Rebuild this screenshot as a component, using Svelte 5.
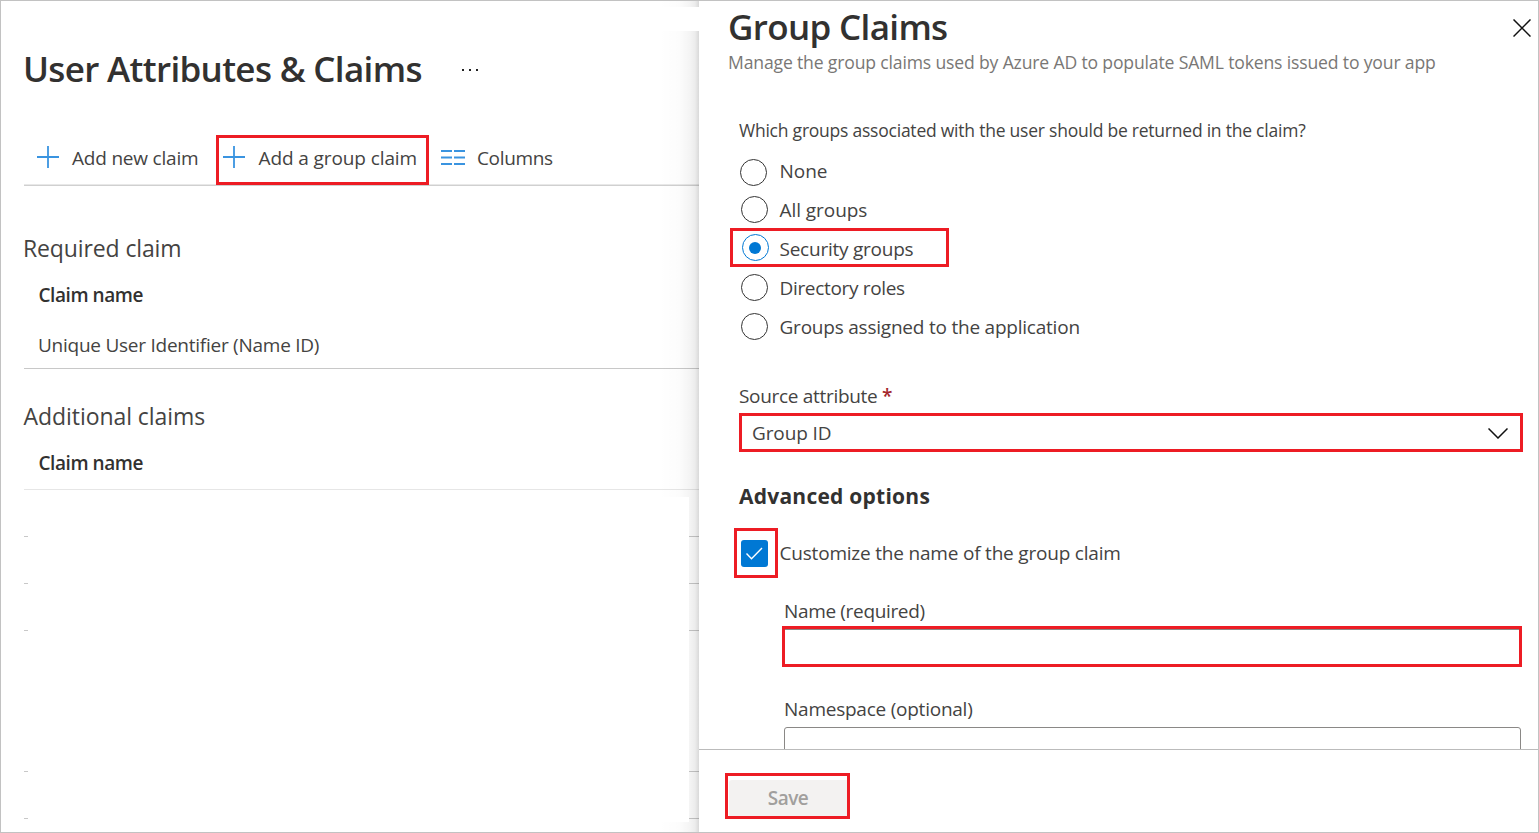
<script>
  const options = [
    { label: 'None', ls: -0.05, top: 1, left: 0 },
    { label: 'All groups', ls: -0.06, top: -1, left: 1 },
    { label: 'Security groups', ls: -0.24, top: -2, left: 2 },
    { label: 'Directory roles', ls: -0.33, top: -1, left: 1 },
    { label: 'Groups assigned to the application', ls: -0.22, top: -1, left: 1 }
  ];
  let selected = $state('Security groups');
  let customize = $state(true);
  const rows = [47, 47, 47, 141, 47];
</script>

{#snippet plus()}
  <svg class="plus" width="22" height="22" viewBox="0 0 22 22"><path d="M11 0v22M0 11h22" /></svg>
{/snippet}

<div class="page">
  <main class="left">
    <header class="title-row">
      <h1>User Attributes &amp; Claims</h1>
      <span class="dots"><i></i><i></i><i></i></span>
    </header>

    <nav class="toolbar">
      <button class="tool new">{@render plus()}<span>Add new claim</span></button>
      <button class="tool group">{@render plus()}<span>Add a group claim</span></button>
      <button class="tool cols">
        <svg width="24" height="15" viewBox="0 0 24 15"><path d="M0 1h11M13 1H24M0 7.5h11M13 7.5H24M0 14h11M13 14H24" /></svg>
        <span>Columns</span>
      </button>
    </nav>

    <section class="required">
      <h2>Required claim</h2>
      <div class="th">Claim name</div>
      <div class="td">Unique User Identifier (Name ID)</div>
    </section>
    <section class="additional">
      <h2>Additional claims</h2>
      <div class="th last">Claim name</div>
      {#each rows as h}
        <div class="blank" style="height:{h}px"><i></i><i></i></div>
      {/each}
    </section>
    <div class="shade"><i></i><i></i><i></i><i></i><i></i></div>
  </main>

  <aside class="panel">
    <div class="body">
      <header class="panel-head">
        <h1>Group Claims</h1>
        <button class="close" aria-label="Close">
          <svg width="18" height="18" viewBox="0 0 18 18"><path d="M.5.5l17 17M17.5.5l-17 17" /></svg>
        </button>
      </header>
      <p class="sub">Manage the group claims used by Azure AD to populate SAML tokens issued to your app</p>
      <p class="question">Which groups associated with the user should be returned in the claim?</p>
      <div class="options">
        {#each options as o}
          <button class="option" onclick={() => (selected = o.label)}>
            <span class="ring" class:on={selected === o.label} style="top:{o.top}px;left:{o.left}px"></span>
            <span class="label" style="letter-spacing:{o.ls}px">{o.label}</span>
            {#if o.label === 'Security groups'}<span class="frame"></span>{/if}
          </button>
        {/each}
      </div>

      <div class="source">Source attribute <b>*</b></div>
      <button class="select">
        <span>Group ID</span>
        <svg width="20" height="11" viewBox="0 0 20 11"><path d="M.5.5L10 10 19.5.5" /></svg>
      </button>

      <h3>Advanced options</h3>
      <div class="check-row">
        <button class="check-frame" aria-label="Customize" onclick={() => (customize = !customize)}>
          <span class="check">
            {#if customize}<svg width="27" height="27" viewBox="0 0 27 27"><path d="M5.5 13.6l5 5.2L21 8" /></svg>{/if}
          </span>
        </button>
        <span>Customize the name of the group claim</span>
      </div>

      <div class="field name">Name (required)</div>
      <div class="input-marked"></div>
      <div class="field space">Namespace (optional)</div>
      <div class="input"></div>
    </div>
    <footer><div class="save-frame"><button class="save" disabled>Save</button></div></footer>
  </aside>
</div>

<style>
  :global(body) { background: #fff; }
  * { box-sizing: border-box; }
  .page {
    position: relative; display: grid; grid-template-columns: 699px 1fr;
    width: 1539px; height: 833px; overflow: hidden; background: #fff;
    font: 400 19px "Open Sans", "Noto Sans", sans-serif; color: #444342;
    white-space: nowrap;
  }
  .page::after {
    content: ""; position: absolute; inset: 0; border: 1px solid #c2c2c2; pointer-events: none;
  }
  h1, h2, h3, p { margin: 0; }
  button {
    font: inherit; color: inherit; background: none; border: 0; padding: 0; margin: 0;
    text-align: left; white-space: nowrap; letter-spacing: inherit;
  }
  svg { display: block; flex: none; fill: none; }
  h1 { font-size: 35px; font-weight: 600; color: #323130; letter-spacing: -.66px; }

  .left { position: relative; height: 833px; padding: 44px 0 0 24px; overflow: hidden; }
  .title-row { display: flex; align-items: center; height: 48px; }
  .title-row h1 { width: 437px; line-height: 48px; margin-left: -1px; padding-top: 1px; }
  .dots { display: flex; gap: 5px; padding-top: 4px; margin-left: 2px; }
  .dots i { width: 2px; height: 2px; background: #222; }

  .toolbar {
    display: flex; height: 56px; margin-top: 38px;
    border-bottom: 1px solid #d0d0d0; box-shadow: inset 0 -1px #e8e8e8;
  }
  .tool { display: flex; align-items: center; height: 55px; }
  .tool svg { position: relative; top: -.5px; stroke: #3a94e0; stroke-width: 1.8; }
  .tool span { padding-top: 1px; }
  .new { width: 192px; padding-left: 13px; letter-spacing: -.2px; }
  .new svg { margin-right: 13px; }
  .group {
    position: relative; width: 213px; height: 50px; margin-top: 5px; border: 3px solid #ed1c24;
    padding-left: 4px; padding-bottom: 5px; letter-spacing: -.1px;
  }
  .group svg { margin-right: 13.5px; }
  .cols { padding-left: 12px; letter-spacing: -.35px; }
  .cols svg { stroke-width: 2; margin-right: 12px; }

  h2 { font-size: 23px; font-weight: 400; line-height: 40px; height: 40px; letter-spacing: -.06px; }
  .required h2 { margin-left: -1px; padding-top: 0; letter-spacing: -.12px; }
  .additional h2 { margin-left: -.5px; }
  .required { margin-top: 42px; }
  .additional { margin-top: 27px; }
  .th { height: 40px; line-height: 40px; margin-top: 7px; padding-left: 14.5px; font-weight: 600; color: #323130; letter-spacing: -.44px; }
  .td { height: 54px; padding: 7px 0 0 14px; line-height: 47px; border-bottom: 1px solid #c8c8c8; letter-spacing: -.25px; }
  .th.last { height: 47px; border-bottom: 1px solid #e6e6e6; }
  .blank { display: flex; justify-content: space-between; align-items: flex-end; }
  .blank i { width: 4px; height: 1px; background: #c8c8c8; }
  .blank i + i { width: 10px; }

  .shade {
    position: absolute; top: 1px; right: 0; bottom: 0; width: 40px;
    display: flex; flex-direction: column; align-items: flex-end; pointer-events: none;
  }
  .shade i {
    width: 40px; height: 6px; background: linear-gradient(to right, transparent, rgba(0,0,0,.012) 50%, rgba(0,0,0,.04) 75%, rgba(0,0,0,.075) 90%, rgba(0,0,0,.15)) right / 40px 100% no-repeat;
  }
  .shade i:nth-child(2) { height: 24px; background: none; }
  .shade i:nth-child(3) { height: 466px; }
  .shade i:nth-child(4) { width: 10px; height: 325px; }
  .shade i:nth-child(5) { height: 11px; }

  .panel { display: flex; flex-direction: column; height: 833px; background: #fff; }
  .body { height: 749px; overflow: hidden; padding: 2px 16px 0 40px; }
  .panel-head { display: flex; justify-content: space-between; height: 48px; margin-left: -11px; }
  .panel-head h1 { line-height: 50px; }
  .close { height: 18px; margin: 17px -8px 0 0; }
  .close svg { stroke: #111; stroke-width: 1.5; }
  .sub { height: 24px; line-height: 24px; margin-left: -11px; font-size: 17.6px; letter-spacing: -.167px; color: #797775; }
  .question { height: 26px; line-height: 26px; margin-top: 43px; font-size: 17.5px; letter-spacing: -.228px; }
  .options { margin-top: 9px; }
  .option { position: relative; display: flex; align-items: center; width: 219px; height: 39px; padding-left: 40px; }
  .label { line-height: 39px; }
  .ring {
    position: relative; flex: none; width: 27px; height: 27px; margin: 0 12.5px 0 -39px;
    border: 1.5px solid #333; border-radius: 50%; display: grid; place-items: center;
  }
  .ring.on { border-color: #0078d4; }
  .ring.on::after { content: ""; width: 12px; height: 12px; margin-left: -1px; border-radius: 50%; background: #0078d4; }
  .frame { position: absolute; left: -9px; top: -2px; width: 219px; height: 39px; border: 3px solid #ed1c24; }

  .source { height: 26px; line-height: 26px; margin-top: 36px; letter-spacing: -.31px; }
  .source b { color: #a4262c; font-weight: 600; }
  .select {
    display: flex; align-items: center; justify-content: space-between; width: 784px; height: 39px;
    margin-top: 4px; padding: 0 12px 0 10px; border: 3px solid #ed1c24; letter-spacing: -.12px;
  }
  .select svg { position: relative; top: .5px; stroke: #111; stroke-width: 1.5; }
  h3 { height: 30px; line-height: 30px; margin-top: 29px; font-size: 21px; font-weight: 700; color: #323130; letter-spacing: .24px; }
  .check-row { display: flex; align-items: center; height: 50px; margin-top: 17px; margin-left: -5px; letter-spacing: -.2px; }
  .check-frame { width: 44px; height: 50px; border: 3px solid #ed1c24; padding: 5px 0 0 4px; margin-right: 1.5px; }
  .check { display: block; width: 27px; height: 27px; margin-top: -4px; border-radius: 3px; background: #0078d4; }
  .check svg { stroke: #fff; stroke-width: 1.4; }
  .field { height: 26px; line-height: 26px; margin-left: 45px; }
  .name { margin-top: 20px; letter-spacing: -.34px; }
  .space { margin-top: 29px; letter-spacing: -.24px; }
  .input-marked { width: 740px; height: 41px; margin: 2px 0 0 43px; border: 3px solid #ed1c24; box-shadow: inset 0 1px #8a8886; }
  .input { width: 737px; height: 40px; margin: 5px 0 0 45px; border: 1px solid #8a8886; border-radius: 3px; }
  footer { flex: 1; border-top: 1px solid #bbb; padding: 23px 0 0 26px; }
  .save-frame { width: 125px; height: 46px; border: 3px solid #ed1c24; padding: 4px 0 0 1px; }
  .save {
    display: block; width: 118px; height: 36px; line-height: 36px; border-radius: 3px 0 0 0; background: #f3f2f1;
    color: #a19f9d; font-weight: 600; text-align: center; letter-spacing: -.54px;
  }
</style>
